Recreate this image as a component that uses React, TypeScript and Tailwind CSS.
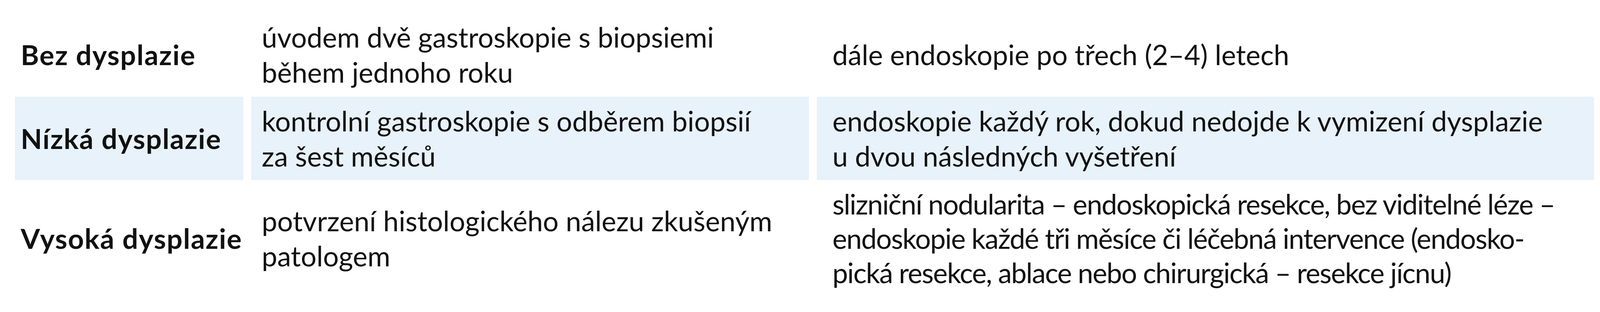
import React from "react";

type Row = {
  label: string;
  first: string[];
  second: string[];
  shaded: boolean;
  pad: string;
  tight: boolean;
};

const rows: Row[] = [
  {
    label: "Bez dysplazie",
    first: ["úvodem dvě gastroskopie s biopsiemi", "během jednoho roku"],
    second: ["dále endoskopie po třech (2–4) letech"],
    shaded: false,
    pad: "py-[18px]",
    tight: false,
  },
  {
    label: "Nízká dysplazie",
    first: ["kontrolní gastroskopie s odběrem biopsií", "za šest měsíců"],
    second: [
      "endoskopie každý rok, dokud nedojde k vymizení dysplazie",
      "u dvou následných vyšetření",
    ],
    shaded: true,
    pad: "py-[17px]",
    tight: false,
  },
  {
    label: "Vysoká dysplazie",
    first: ["potvrzení histologického nálezu zkušeným", "patologem"],
    second: [
      "slizniční nodularita – endoskopická resekce, bez viditelné léze –",
      "endoskopie každé tři měsíce či léčebná intervence (endosko-",
      "pická resekce, ablace nebo chirurgická – resekce jícnu)",
    ],
    shaded: false,
    pad: "py-[17px]",
    tight: true,
  },
];

function Lines({ lines }: { lines: string[] }) {
  return (
    <>
      {lines.map((l, i) => (
        <span key={i} className="block whitespace-nowrap">
          {l}
        </span>
      ))}
    </>
  );
}

export default function App() {
  return (
    <div className="w-[4114px] h-[800px] overflow-hidden bg-white pt-[32px] pl-[38px] font-['Lato',sans-serif] text-[71px] leading-[90px] text-[#111111]">
      <div className="grid grid-cols-[585px_1428px_1990px] gap-x-[20px]">
        {rows.map((r, i) => {
          const bg = r.shaded ? "bg-[#e8f2fb]" : "bg-white";
          return (
            <React.Fragment key={i}>
              <div className={`flex flex-col justify-center pl-[15px] ${r.pad} ${bg}`}>
                <span className="block whitespace-nowrap font-bold tracking-[1.8px]">{r.label}</span>
              </div>
              <div className={`flex flex-col justify-center pl-[27px] ${r.pad} ${bg}`}>
                <Lines lines={r.first} />
              </div>
              <div
                className={`flex flex-col justify-center pl-[40px] ${r.pad} ${bg} ${
                  r.tight ? "tracking-[-1.7px] leading-[88px]" : ""
                }`}
              >
                <Lines lines={r.second} />
              </div>
            </React.Fragment>
          );
        })}
      </div>
    </div>
  );
}
